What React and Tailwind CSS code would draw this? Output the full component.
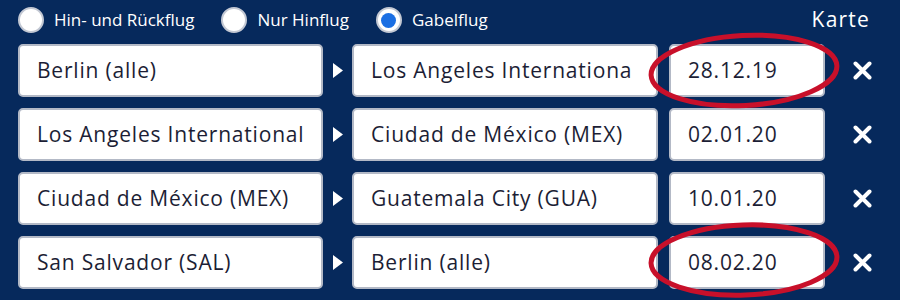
import React from "react";

const rows = [
  ["Berlin (alle)", "Los Angeles Internationa", "28.12.19"],
  ["Los Angeles International", "Ciudad de México (MEX)", "02.01.20"],
  ["Ciudad de México (MEX)", "Guatemala City (GUA)", "10.01.20"],
  ["San Salvador (SAL)", "Berlin (alle)", "08.02.20"],
];

function Radio({ label, checked }) {
  return (
    <div className="flex items-center gap-[10px]">
      <div className="w-[26px] h-[26px] rounded-full bg-white border-2 border-[#c3c8d3] flex items-center justify-center">
        {checked && <div className="w-[15px] h-[15px] rounded-full bg-[#1b6fe3]" />}
      </div>
      <span className="text-white text-[17px] font-medium">{label}</span>
    </div>
  );
}

function Box({ children, w, cls = "" }) {
  return (
    <div
      className={`h-[53px] bg-white rounded-[5px] border-2 border-[#b3b9c6] flex items-center pl-[17px] overflow-hidden whitespace-nowrap text-[21px] tracking-[0.8px] text-[#1c1e35] ${w} ${cls}`}
    >
      {children}
    </div>
  );
}

export default function App() {
  return (
    <div
      className="relative w-[900px] h-[300px] bg-[#06295c] overflow-hidden"
      style={{ fontFamily: "'Open Sans', 'Noto Sans', sans-serif" }}
    >
      <div className="flex items-center h-[26px] mt-[7px] pl-[18px] pr-[30px]">
        <div className="flex items-center gap-[27px]">
          <Radio label="Hin- und Rückflug" />
          <Radio label="Nur Hinflug" />
          <Radio label="Gabelflug" checked />
        </div>
        <span className="ml-auto text-white text-[21px] tracking-[1.2px]">Karte</span>
      </div>
      <div className="flex flex-col gap-[11px] mt-[11px] pl-[18px]">
        {rows.map((r, i) => (
          <div key={i} className="flex items-center">
            <Box w="w-[305px]">{r[0]}</Box>
            <div className="w-[29px] flex justify-center">
              <svg width="10" height="15" viewBox="0 0 10 15">
                <polygon points="0,0 10,7.5 0,15" fill="#ffffff" />
              </svg>
            </div>
            <Box w="w-[306px]">{r[1]}</Box>
            <Box w="w-[156px]" cls="ml-[11px]">{r[2]}</Box>
            <div className="w-[75px] flex justify-center">
              <svg width="19" height="19" viewBox="0 0 19 19">
                <path d="M2.5 2.5 L16.5 16.5 M16.5 2.5 L2.5 16.5" stroke="#ffffff" strokeWidth="4" strokeLinecap="round" />
              </svg>
            </div>
          </div>
        ))}
      </div>
      <svg className="absolute left-0 top-0 pointer-events-none" width="900" height="300" viewBox="0 0 900 300">
        <ellipse cx="744" cy="70.5" rx="93" ry="35" fill="none" stroke="#c8102a" strokeWidth="5" transform="rotate(-3 744 70.5)" />
        <ellipse cx="744" cy="260" rx="93" ry="35" fill="none" stroke="#c8102a" strokeWidth="5" transform="rotate(-2 744 260)" />
      </svg>
    </div>
  );
}
